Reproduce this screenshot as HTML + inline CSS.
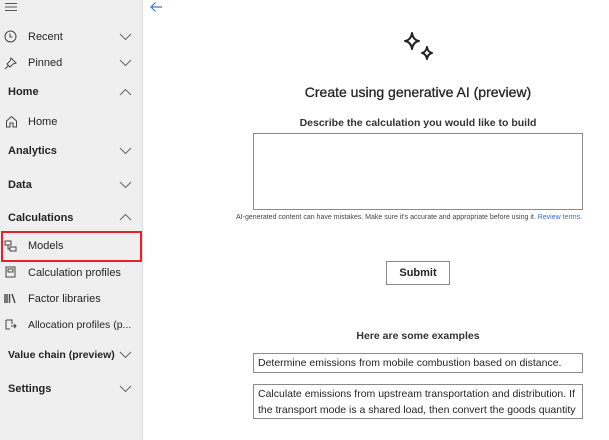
<!DOCTYPE html>
<html><head><style>
*{margin:0;padding:0;box-sizing:border-box}
body{width:609px;height:440px;overflow:hidden;background:#fff;font-family:"Liberation Sans",sans-serif;color:#242424;position:relative}
#side{position:absolute;left:0;top:0;width:143px;height:440px;background:#efefef;border-right:1px solid #dcdcdc}
.t{position:absolute;font-size:11px;white-space:nowrap;line-height:14px}
.b{font-weight:bold}
.chev{position:absolute;left:119px;width:13px;height:8px}
.ic{position:absolute;left:4px;width:13px;height:13px}
.box{position:absolute;border:1px solid #8a8a8a;background:#fff}
</style></head><body>
<div id="side">
<svg style="position:absolute;left:5px;top:2px" width="13" height="10"><path d="M0 1.5H12M0 5H12M0 8.5H12" stroke="#555" stroke-width="1"/></svg>
<svg class="ic" style="top:30px" viewBox="0 0 13 13"><circle cx="6.5" cy="6.5" r="5.5" fill="none" stroke="#444" stroke-width="1"/><path d="M6 3.5V7H8.5" fill="none" stroke="#444"/></svg>
<div class="t" style="left:28px;top:30px">Recent</div>
<svg class="chev" style="top:33px"><path d="M1 1L6.5 6.5L12 1" fill="none" stroke="#666"/></svg>
<svg class="ic" style="top:57px" viewBox="0 0 13 13"><path d="M7 1L12 6L9 7L6 10L3 7L6 4Z M4.5 8.5L1 12" fill="none" stroke="#444"/></svg>
<div class="t" style="left:28px;top:56px">Pinned</div>
<svg class="chev" style="top:59px"><path d="M1 1L6.5 6.5L12 1" fill="none" stroke="#666"/></svg>
<div class="t b" style="left:8px;top:85px">Home</div>
<svg class="chev" style="top:88px"><path d="M1 7L6.5 1.5L12 7" fill="none" stroke="#666"/></svg>
<svg class="ic" style="top:115px;left:5px" viewBox="0 0 13 13"><path d="M1.5 6L6.5 1.5L11.5 6V12H8V8H5V12H1.5Z" fill="none" stroke="#444"/></svg>
<div class="t" style="left:28px;top:115px">Home</div>
<div class="t b" style="left:8px;top:144px">Analytics</div>
<svg class="chev" style="top:147px"><path d="M1 1L6.5 6.5L12 1" fill="none" stroke="#666"/></svg>
<div class="t b" style="left:8px;top:178px">Data</div>
<svg class="chev" style="top:181px"><path d="M1 1L6.5 6.5L12 1" fill="none" stroke="#666"/></svg>
<div class="t b" style="left:8px;top:211px">Calculations</div>
<svg class="chev" style="top:213px"><path d="M1 7L6.5 1.5L12 7" fill="none" stroke="#666"/></svg>
<div style="position:absolute;left:1px;top:231px;width:141px;height:31px;border:2px solid #e8202a"></div>
<svg class="ic" style="top:240px" viewBox="0 0 13 13"><path d="M1 1H7V5H1Z M4 5V9H6 M6 7H12V11H6Z" fill="none" stroke="#444"/></svg>
<div class="t" style="left:28px;top:239px">Models</div>
<svg class="ic" style="top:266px" viewBox="0 0 13 13"><path d="M2 1H11V11H2Z M4 3H9V6H4Z" fill="none" stroke="#444"/></svg>
<div class="t" style="left:28px;top:266px">Calculation profiles</div>
<svg class="ic" style="top:292px" viewBox="0 0 13 13"><path d="M1 2V11M3 2V11M5.5 2V11M8 2L11 11" fill="none" stroke="#444" stroke-width="1.4"/></svg>
<div class="t" style="left:28px;top:292px">Factor libraries</div>
<svg class="ic" style="top:318px" viewBox="0 0 13 13"><path d="M2 2H8V6 M2 2V11H6 M7 8H12M10 6L12 8L10 10" fill="none" stroke="#444"/></svg>
<div class="t" style="left:28px;top:318px;font-size:10.5px">Allocation profiles (p...</div>
<div class="t b" style="left:8px;top:348px;font-size:10.5px">Value chain (preview)</div>
<svg class="chev" style="top:351px"><path d="M1 1L6.5 6.5L12 1" fill="none" stroke="#666"/></svg>
<div class="t b" style="left:8px;top:382px">Settings</div>
<svg class="chev" style="top:385px"><path d="M1 1L6.5 6.5L12 1" fill="none" stroke="#666"/></svg>
</div>
<div id="main">
<svg style="position:absolute;left:149px;top:1px" width="14" height="12"><path d="M13 6H2M6.5 1.5L2 6L6.5 10.5" fill="none" stroke="#3a78d0" stroke-width="1.2"/></svg>
<svg style="position:absolute;left:402px;top:31px" width="34" height="34" viewBox="0 0 34 34"><path d="M10 2Q11 9 17 10Q11 11 10 18Q9 11 3 10Q9 9 10 2Z" fill="none" stroke="#222" stroke-width="2" stroke-linejoin="round"/><path d="M25 16Q25.8 21 30 22Q25.8 23 25 28Q24.2 23 20 22Q24.2 21 25 16Z" fill="none" stroke="#222" stroke-width="2" stroke-linejoin="round"/></svg>
<div class="t" style="left:253px;width:330px;text-align:center;top:84px;font-size:14px;line-height:17px;-webkit-text-stroke:0.3px #242424">Create using generative AI (preview)</div>
<div class="t b" style="left:253px;width:330px;text-align:center;top:116px;font-size:10.5px;color:#333">Describe the calculation you would like to build</div>
<div class="box" style="left:253px;top:133px;width:330px;height:77px"></div>
<div class="t" style="left:236px;top:211px;font-size:7px;color:#444">AI-generated content can have mistakes. Make sure it's accurate and appropriate before using it. <span style="color:#2f6fcf">Review terms.</span></div>
<div class="box" style="left:386px;top:261px;width:64px;height:24px;text-align:center;font-size:11px;font-weight:bold;line-height:22px">Submit</div>
<div class="t b" style="left:253px;width:330px;text-align:center;top:329px;font-size:10.5px;color:#333">Here are some examples</div>
<div class="box" style="left:253px;top:353px;width:330px;height:20px;font-size:10.5px;line-height:18px;padding-left:4px;white-space:nowrap;overflow:hidden">Determine emissions from mobile combustion based on distance.</div>
<div class="box" style="left:253px;top:384px;width:330px;height:35px;font-size:10.5px;line-height:16px;padding:1px 4px;overflow:hidden">
<div style="white-space:nowrap;overflow:hidden">Calculate emissions from upstream transportation and distribution. If</div>
<div style="white-space:nowrap;overflow:hidden;text-overflow:ellipsis">the transport mode is a shared load, then convert the goods quantity</div></div>
</div>
</body></html>
